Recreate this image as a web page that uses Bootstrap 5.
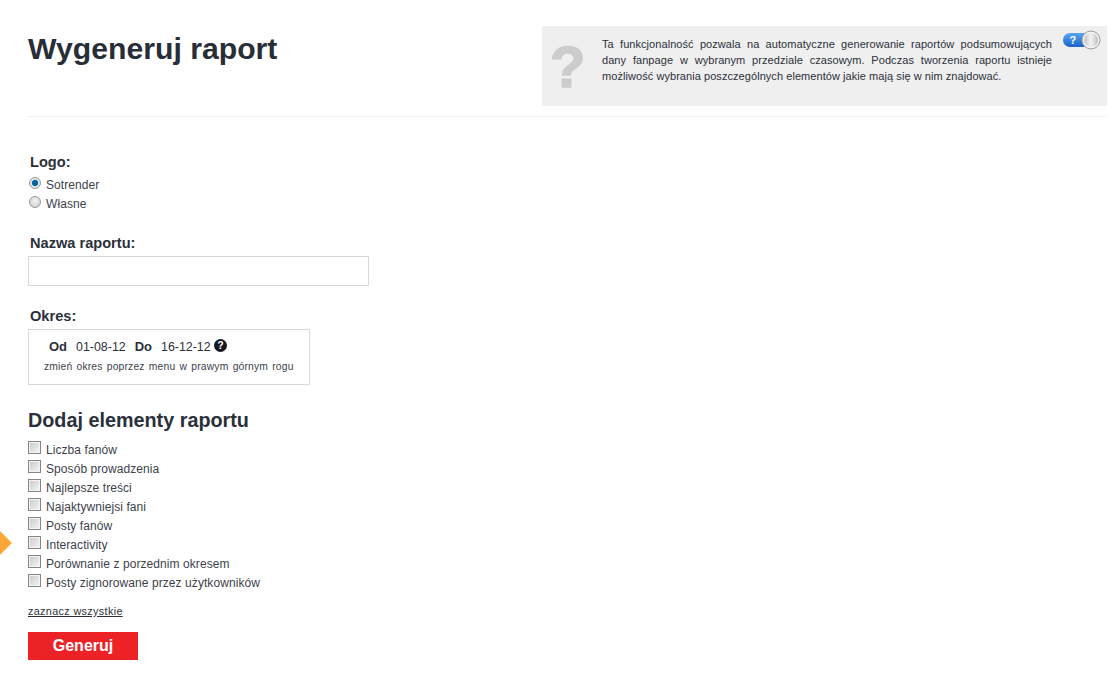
<!DOCTYPE html>
<html lang="pl">
<head>
<meta charset="utf-8">
<title>Wygeneruj raport</title>
<link href="https://cdn.jsdelivr.net/npm/bootstrap@5.3.0/dist/css/bootstrap.min.css" rel="stylesheet">
<style>
html,body{height:100%;overflow:hidden}
body{font-family:"Liberation Sans",Arial,sans-serif;color:#2b303a;background:#fff;font-size:12px;position:relative}
.page-wrap{padding:26px 8px 0 28px}
.head-row{border-bottom:1px solid #f0f0f0;height:91px}
.page-title{font-size:30.2px;font-weight:700;line-height:36px;margin:5px 0 0;color:#282e37}
.info-box{width:565px;height:80px;background:#efefef;position:relative;padding:10px 55px 0 60px;font-size:11px;letter-spacing:.06px;line-height:16px;text-align:justify;color:#2b303a}
.q-mark{position:absolute;left:8px;top:12px;font-size:58px;line-height:58px;font-weight:700;color:#ccc;-webkit-text-stroke:1.6px #ccc}
.toggle-wrap{position:absolute;left:520px;top:4px}
.sec-label{font-size:14.6px;font-weight:700;line-height:16px;margin:0 0 0 2px;color:#2b303a}
.opt{display:flex;align-items:center;height:19px;margin:0;font-size:12px;letter-spacing:.07px;color:#3d3f4b}
.radio-box{appearance:none;width:12px;height:12px;border-radius:50%;border:1px solid #999;background:radial-gradient(circle at 50% 40%,#f4f4f4,#c8c8c8);margin:0 5px 3px 1px;flex:none}
.radio-box:checked{background:radial-gradient(circle,#0a5f9e 0 2.5px,#1c8fd0 3px,#e8e8e8 3.6px,#d5d5d5)}
.check-box{appearance:none;width:13px;height:13px;border:1px solid #858585;background:linear-gradient(135deg,#c8c8c8,#f6f6f6);box-shadow:inset 0 0 0 1px #f4f4f4;margin:0 5px 4px 0;flex:none}
.name-input{width:341px;height:30px;border:1px solid #d8d8d8;display:block;background:#fff;border-radius:0;outline:0}
.period-box{width:282px;height:56px;border:1px solid #d8d8d8}
.period-top{font-size:12.4px;line-height:16px;padding:9px 0 0 20px;display:flex;align-items:flex-start;color:#2b303a}
.period-top b{font-size:13px;margin-right:9px}
.period-top span{margin-right:9px}
.period-top svg{margin-top:0;margin-left:-6px}
.period-note{font-size:10.3px;line-height:14px;margin:5px 0 0 15px;color:#3d3f4b;word-spacing:1.2px;letter-spacing:.17px}
.add-title{font-size:19.8px;font-weight:700;line-height:24px;margin:0;color:#2b303a}
.select-all{font-size:10.8px;letter-spacing:.35px;color:#2b303a;text-decoration:underline;display:inline-block;line-height:12px}
.gen-btn{width:110px;height:28px;background:#ec2227;color:#fff;font-weight:700;font-size:16px;line-height:28px;border:0;border-radius:0;padding:0;display:block}
.arrow-mark{position:absolute;left:-12px;top:531px;width:24px;height:24px;background:#ffa73b;clip-path:polygon(50% 0,100% 50%,50% 100%,0 50%)}
.gap-a{margin-top:37px}.gap-b{margin-top:22px}.gap-c{margin-top:22px}.gap-d{margin-top:23px}.gap-e{margin-top:8px}.gap-f{margin-top:13px}.gap-g{margin-top:12px}.gap-h{margin-top:5px}.gap-i{margin-top:5px}
</style>
</head>
<body>
<div class="arrow-mark"></div>
<div class="page-wrap">
  <div class="head-row d-flex justify-content-between align-items-start">
    <h1 class="page-title">Wygeneruj raport</h1>
    <div class="info-box">
      <span class="q-mark">?</span>
      Ta funkcjonalność pozwala na automatyczne generowanie raportów podsumowujących dany fanpage w wybranym przedziale czasowym. Podczas tworzenia raportu istnieje możliwość wybrania poszczególnych elementów jakie mają się w nim znajdować.
      <svg class="toggle-wrap" width="46" height="22" viewBox="0 0 46 22">
        <defs>
          <linearGradient id="tg" x1="0" y1="0" x2="0" y2="1"><stop offset="0" stop-color="#5aa6f0"/><stop offset="1" stop-color="#1a63c8"/></linearGradient>
          <linearGradient id="kn"><stop offset="0" stop-color="#c2c2c2"/><stop offset=".5" stop-color="#f4f4f4"/><stop offset="1" stop-color="#bcbcbc"/></linearGradient>
        </defs>
        <rect x="1" y="3" width="28" height="14" rx="7" fill="url(#tg)"/>
        <text x="11" y="14" font-size="11" font-weight="700" fill="#fff" text-anchor="middle" font-family="Liberation Sans">?</text>
        <circle cx="29" cy="10" r="9" fill="#f2f2f2" stroke="#9c9c9c"/>
        <circle cx="29" cy="10" r="7" fill="url(#kn)"/>
      </svg>
    </div>
  </div>

  <div class="gap-a">
    <p class="sec-label">Logo:</p>
    <label class="opt gap-h"><input class="radio-box" type="radio" name="logo" checked>Sotrender</label>
    <label class="opt"><input class="radio-box" type="radio" name="logo">Własne</label>
  </div>

  <div class="gap-b">
    <p class="sec-label">Nazwa raportu:</p>
    <input class="name-input gap-i" type="text">
  </div>

  <div class="gap-c">
    <p class="sec-label">Okres:</p>
    <div class="period-box gap-i">
      <div class="period-top">
        <b>Od</b><span>01-08-12</span><b>Do</b><span>16-12-12</span>
        <svg width="13" height="13" viewBox="0 0 13 13"><circle cx="6.5" cy="6.5" r="6.5" fill="#15181e"/><text x="6.5" y="10.3" font-size="10.5" font-weight="700" fill="#fff" text-anchor="middle" font-family="Liberation Sans">?</text></svg>
      </div>
      <p class="period-note">zmień okres poprzez menu w prawym górnym rogu</p>
    </div>
  </div>

  <div class="gap-d">
    <h2 class="add-title">Dodaj elementy raportu</h2>
    <div class="gap-e">
      <label class="opt"><input class="check-box" type="checkbox">Liczba fanów</label>
      <label class="opt"><input class="check-box" type="checkbox">Sposób prowadzenia</label>
      <label class="opt"><input class="check-box" type="checkbox">Najlepsze treści</label>
      <label class="opt"><input class="check-box" type="checkbox">Najaktywniejsi fani</label>
      <label class="opt"><input class="check-box" type="checkbox">Posty fanów</label>
      <label class="opt"><input class="check-box" type="checkbox">Interactivity</label>
      <label class="opt"><input class="check-box" type="checkbox">Porównanie z porzednim okresem</label>
      <label class="opt"><input class="check-box" type="checkbox">Posty zignorowane przez użytkowników</label>
    </div>
    <a class="select-all gap-f" href="#">zaznacz wszystkie</a>
    <button class="gen-btn gap-g" type="button">Generuj</button>
  </div>
</div>
<script src="https://cdn.jsdelivr.net/npm/bootstrap@5.3.0/dist/js/bootstrap.bundle.min.js"></script>
</body>
</html>
